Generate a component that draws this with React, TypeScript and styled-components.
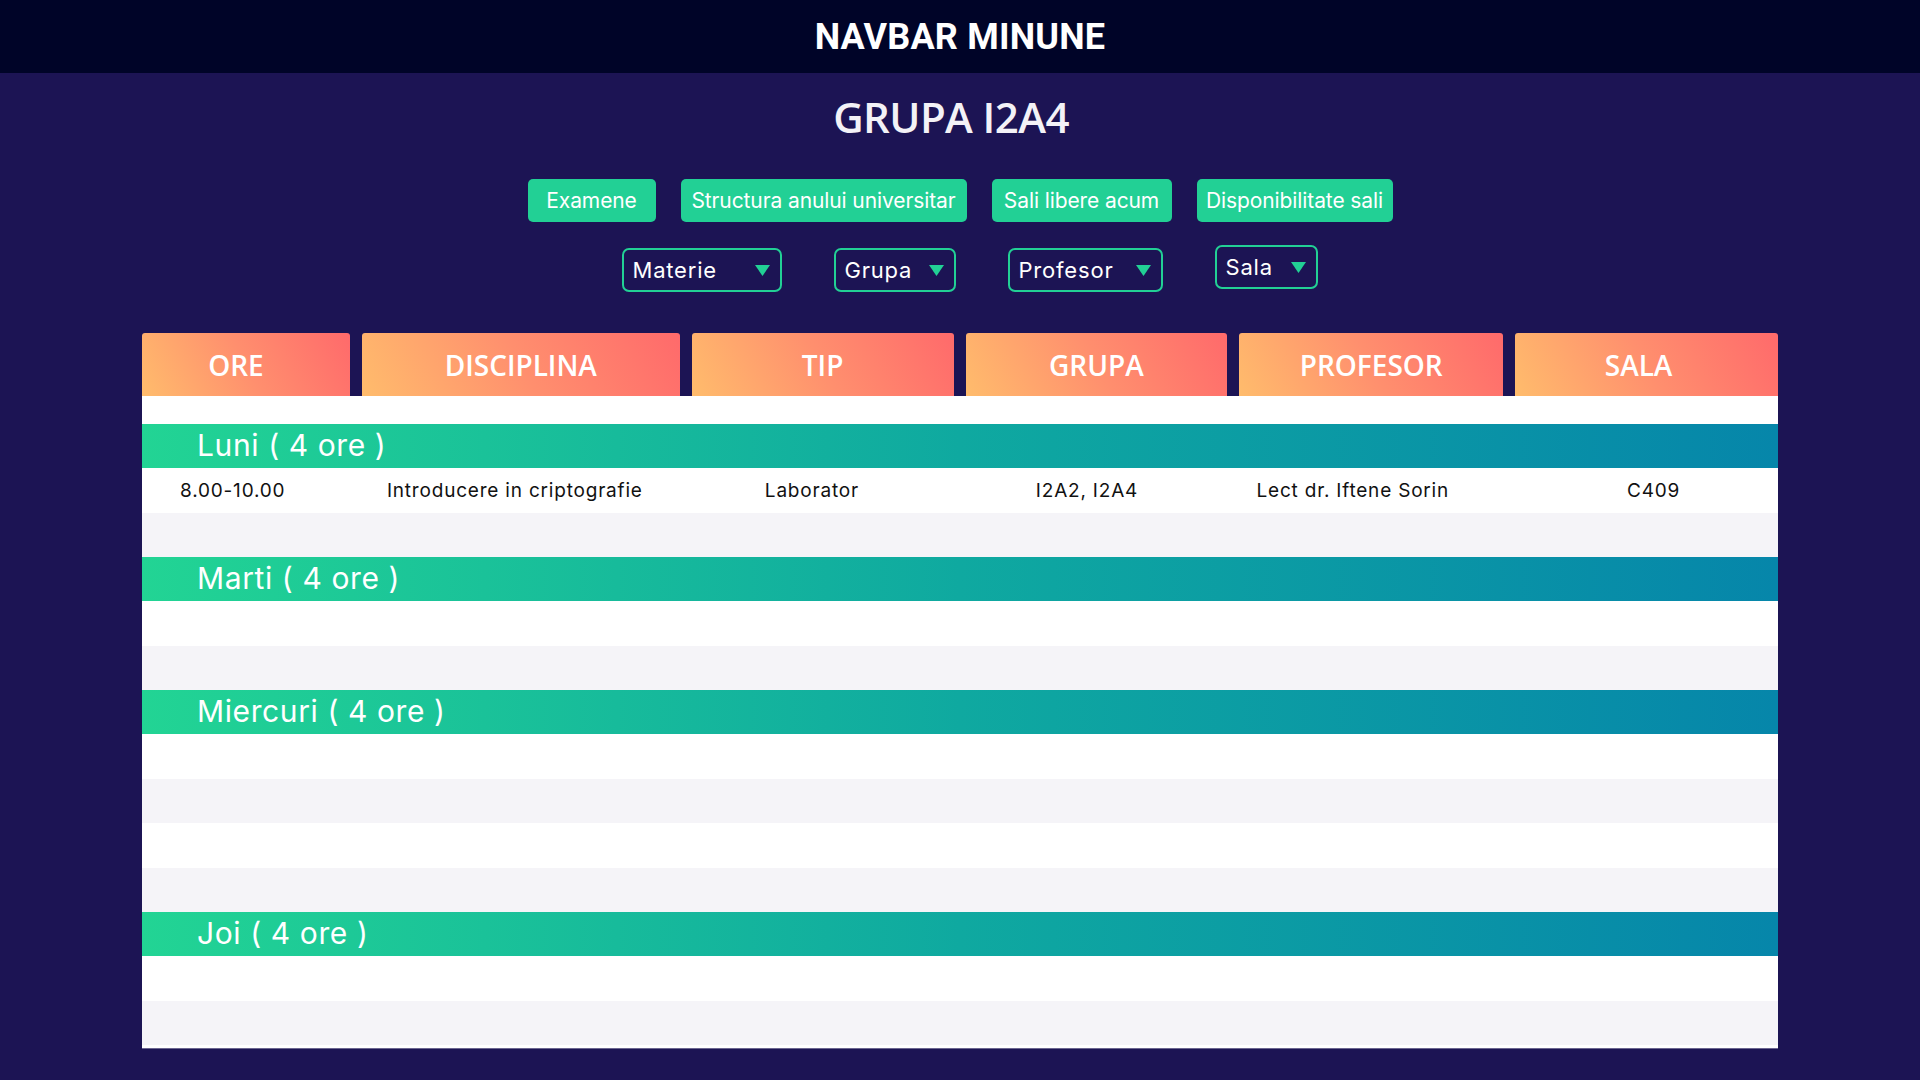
import React from "react";
import styled, { createGlobalStyle } from "styled-components";

const GlobalStyle = createGlobalStyle`
  html, body { margin: 0; padding: 0; background: #1c1454; }
  body { font-family: Inter, "Noto Sans", sans-serif; }
  * { box-sizing: border-box; }
`;

const Navbar = styled.header`
  height: 73px;
  background: #000428;
  display: flex;
  align-items: center;
  justify-content: center;
`;

const Brand = styled.h1`
  margin: 0;
  font-family: Roboto, "Liberation Sans", sans-serif;
  font-weight: 700;
  font-size: 36px;
  color: #ffffff;
  letter-spacing: 0.2px;
`;

const Main = styled.main`
  display: flex;
  flex-direction: column;
  align-items: center;
`;

const Title = styled.h2`
  margin: 15px 0 0;
  padding-right: 18px;
  font-family: "Open Sans", "Noto Sans", sans-serif;
  font-weight: 600;
  font-size: 42px;
  line-height: 57px;
  letter-spacing: -0.6px;
  color: #f3f2f7;
`;

const ButtonRow = styled.nav`
  display: flex;
  gap: 25px;
  margin-top: 34px;
`;

const ActionButton = styled.button<{ $w: number }>`
  width: ${(p) => p.$w}px;
  height: 43px;
  padding: 0;
  border: none;
  border-radius: 5px;
  background: #22d095;
  color: #ffffff;
  font-family: Inter, sans-serif;
  font-size: 21px;
  letter-spacing: -0.1px;
  display: flex;
  align-items: center;
  justify-content: center;
  white-space: nowrap;
`;

const SelectRow = styled.div`
  display: flex;
  align-items: flex-start;
  gap: 52px;
  margin-top: 26px;
  padding-left: 19px;
`;

const Select = styled.div<{ $w: number; $up?: boolean }>`
  width: ${(p) => p.$w}px;
  height: 44px;
  margin-top: ${(p) => (p.$up ? "-3px" : "0")};
  border: 2px solid #22d095;
  border-radius: 7px;
  display: flex;
  align-items: center;
  justify-content: space-between;
  padding: 0 10px 0 9px;
  color: #ffffff;
  font-size: 22px;
  letter-spacing: 0.8px;
`;

const Arrow = () => (
  <svg width="15" height="11" viewBox="0 0 15 11">
    <polygon points="0,0 15,0 7.5,11" fill="#22d095" />
  </svg>
);

const Table = styled.section`
  width: 1636px;
  margin-top: 41px;
`;

const HeaderRow = styled.div`
  display: grid;
  grid-template-columns: 208fr 318fr 262fr 262fr 264fr 263fr;
  column-gap: 12px;
`;

const HeaderCell = styled.div`
  height: 63px;
  border-radius: 3px 3px 0 0;
  background: linear-gradient(62deg, #ffbc6c 0%, #ff8f6e 50%, #ff6a6b 100%);
  display: flex;
  align-items: center;
  justify-content: center;
  color: #ffffff;
  font-family: "Open Sans", sans-serif;
  font-weight: 600;
  font-size: 28px;
  &:first-child { padding-right: 20px; }
  &:last-child { padding-right: 16px; }
`;

const Body = styled.div`
  background: #ffffff;
  padding: 28px 0 3px;
  border-bottom: 1px solid #6b6590;
`;

const DayBar = styled.div`
  height: 44px;
  background: linear-gradient(to right, #22d494 0%, #0fa9a0 50%, #0686aa 100%);
  display: flex;
  align-items: center;
  padding: 0 0 3px 55px;
  color: #ffffff;
  font-size: 30px;
  letter-spacing: 0.6px;
  font-weight: 400;
`;

const Row = styled.div<{ $alt: boolean }>`
  height: 44.5px;
  display: grid;
  grid-template-columns: 182fr 384fr 212fr 340fr 188fr 330fr;
  align-items: center;
  background: ${(p) => (p.$alt ? "#f5f4f8" : "#ffffff")};
`;

const Cell = styled.div`
  text-align: center;
  font-size: 19px;
  letter-spacing: 0.8px;
  color: #111111;
  white-space: nowrap;
  &:last-child { padding-left: 80px; }
`;

const buttons = [
  { label: "Examene", w: 128 },
  { label: "Structura anului universitar", w: 286 },
  { label: "Sali libere acum", w: 180 },
  { label: "Disponibilitate sali", w: 196 },
];

const selects = [
  { label: "Materie", w: 160 },
  { label: "Grupa", w: 122 },
  { label: "Profesor", w: 155 },
  { label: "Sala", w: 103, up: true },
];

const headers = ["ORE", "DISCIPLINA", "TIP", "GRUPA", "PROFESOR", "SALA"];

type Lesson = string[] | null;

const days: { name: string; rows: Lesson[] }[] = [
  {
    name: "Luni",
    rows: [
      ["8.00-10.00", "Introducere in criptografie", "Laborator", "I2A2, I2A4", "Lect dr. Iftene Sorin", "C409"],
      null,
    ],
  },
  { name: "Marti", rows: [null, null] },
  { name: "Miercuri", rows: [null, null, null, null] },
  { name: "Joi", rows: [null, null] },
];

export default function App() {
  return (
    <>
      <GlobalStyle />
      <Navbar>
        <Brand>NAVBAR MINUNE</Brand>
      </Navbar>
      <Main>
        <Title>GRUPA I2A4</Title>
        <ButtonRow>
          {buttons.map((b) => (
            <ActionButton key={b.label} $w={b.w}>
              {b.label}
            </ActionButton>
          ))}
        </ButtonRow>
        <SelectRow>
          {selects.map((s) => (
            <Select key={s.label} $w={s.w} $up={s.up}>
              <span>{s.label}</span>
              <Arrow />
            </Select>
          ))}
        </SelectRow>
        <Table>
          <HeaderRow>
            {headers.map((h) => (
              <HeaderCell key={h}>{h}</HeaderCell>
            ))}
          </HeaderRow>
          <Body>
            {days.map((d) => (
              <React.Fragment key={d.name}>
                <DayBar>{d.name} ( 4 ore )</DayBar>
                {d.rows.map((r, i) => (
                  <Row key={i} $alt={i % 2 === 1}>
                    {r ? r.map((c, j) => <Cell key={j}>{c}</Cell>) : null}
                  </Row>
                ))}
              </React.Fragment>
            ))}
          </Body>
        </Table>
      </Main>
    </>
  );
}
